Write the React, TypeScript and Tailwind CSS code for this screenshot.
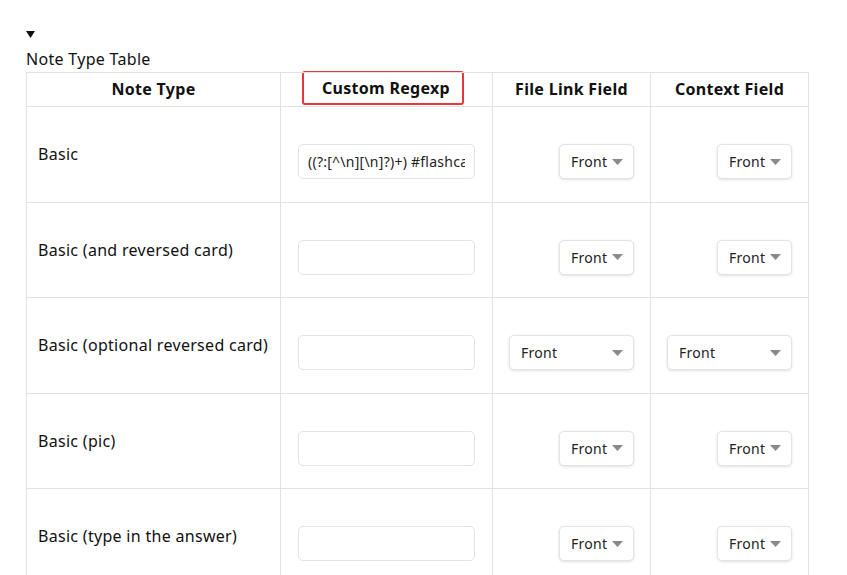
import React from "react";

type Row = {
  name: string;
  regex: string;
  wide?: boolean;
};

const rows: Row[] = [
  { name: "Basic", regex: "((?:[^\\n][\\n]?)+) #flashcard" },
  { name: "Basic (and reversed card)", regex: "" },
  { name: "Basic (optional reversed card)", regex: "", wide: true },
  { name: "Basic (pic)", regex: "" },
  { name: "Basic (type in the answer)", regex: "" },
];

function Select({ wide }: { wide?: boolean }) {
  return (
    <div
      className={`inline-flex items-center justify-between h-[35px] ${
        wide ? "w-[125px]" : "w-[75px]"
      } pl-[11px] pr-[10px] bg-white border border-[#e3e3e3] rounded-[5px] shadow-[0_1px_3px_rgba(0,0,0,0.12)] text-[14px] tracking-[0.25px] text-[#222]`}
    >
      <span>Front</span>
      <svg width="11" height="6" viewBox="0 0 11 6">
        <polygon points="0,0 11,0 5.5,6" fill="#8a8a8a" />
      </svg>
    </div>
  );
}

export default function App() {
  return (
    <div
      className="w-[847px] h-[575px] overflow-hidden bg-white pl-[26px] pt-[31px] text-[#111] tracking-[0.3px]"
      style={{ fontFamily: '"Noto Sans", "Open Sans", sans-serif' }}
    >
      <svg width="9" height="7" viewBox="0 0 9 7" className="block">
        <polygon points="0,0 9,0 4.5,7" fill="#111" />
      </svg>
      <div className="text-[16px] leading-[22px] mt-[10px] h-[24px]">Note Type Table</div>
      <table className="border-collapse w-[783px] table-fixed text-[16px]">
        <colgroup>
          <col className="w-[254px]" />
          <col className="w-[212px]" />
          <col className="w-[158px]" />
          <col className="w-[158px]" />
        </colgroup>
        <thead>
          <tr className="h-[34px]">
            <th className="border border-[#e2e2e2] font-bold text-center p-0 pb-[1px]">Note Type</th>
            <th className="border border-[#e2e2e2] font-bold text-center p-0">
              <div className="ml-[21px] -mt-[3px] mb-[1px] w-[162px] h-[34px] border-2 border-[#e8373a] rounded-[3px] flex items-center justify-center pl-[6px]">
                Custom Regexp
              </div>
            </th>
            <th className="border border-[#e2e2e2] font-bold text-center p-0 pb-[1px]">File Link Field</th>
            <th className="border border-[#e2e2e2] font-bold text-center p-0 pb-[1px]">Context Field</th>
          </tr>
        </thead>
        <tbody>
          {rows.map((r) => (
            <tr key={r.name} className="h-[95.5px]">
              <td className="border border-[#e2e2e2] pl-[11px] pr-0 align-middle whitespace-nowrap">{r.name}</td>
              <td className="border border-[#e2e2e2] pl-[17px] pr-[17px] pt-[15px] align-middle">
                <input
                  readOnly
                  value={r.regex}
                  className="block h-[35px] w-full border border-[#e3e3e3] rounded-[5px] px-[9px] outline-none text-[14px] tracking-[0.25px] text-[#222] bg-white"
                />
              </td>
              <td className="border border-[#e2e2e2] pr-[16px] pt-[15px] align-middle text-right">
                <Select wide={r.wide} />
              </td>
              <td className="border border-[#e2e2e2] pr-[16px] pt-[15px] align-middle text-right">
                <Select wide={r.wide} />
              </td>
            </tr>
          ))}
        </tbody>
      </table>
    </div>
  );
}
